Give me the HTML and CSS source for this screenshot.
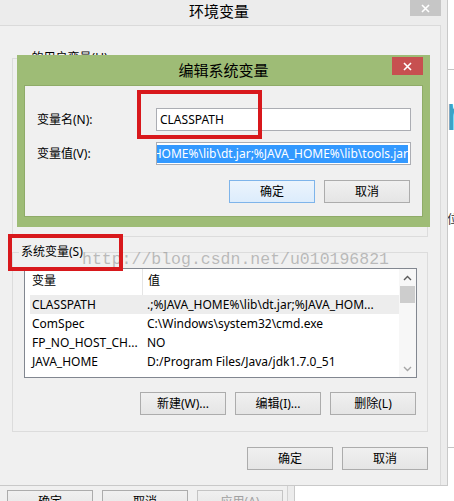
FILE: index.html
```html
<!DOCTYPE html>
<html lang="zh-CN">
<head>
<meta charset="UTF-8">
<meta name="viewport" content="width=device-width, initial-scale=1.0">
<title>环境变量</title>
<link rel="stylesheet" href="styles.css">
</head>
<body>
<div class="desk">
	<!-- 环境变量 窗口 -->
	<div class="env">
		<div class="env-title">
			<span class="env-caption">环境变量</span>
			<span class="env-close">
				<svg width="9" height="9" viewBox="0 0 9 9"><path d="M1 1L8 8M8 1L1 8" stroke="#fff" stroke-width="1.6"/></svg>
			</span>
		</div>
		<div class="env-panel">
			<fieldset class="group group-user">
				<legend>u 的用户变量(U)</legend>
			</fieldset>
			<fieldset class="group group-sys">
				<legend>系统变量(S)</legend>
				<div class="group-body">
					<div class="list">
						<div class="list-main">
							<div class="list-head"><span class="c1">变量</span><span class="c2">值</span></div>
							<div class="list-row sel"><span class="c1">CLASSPATH</span><span class="c2">.;%JAVA_HOME%\lib\dt.jar;%JAVA_HOM...</span></div>
							<div class="list-row"><span class="c1">ComSpec</span><span class="c2">C:\Windows\system32\cmd.exe</span></div>
							<div class="list-row"><span class="c1">FP_NO_HOST_CH...</span><span class="c2">NO</span></div>
							<div class="list-row"><span class="c1">JAVA_HOME</span><span class="c2">D:/Program Files/Java/jdk1.7.0_51</span></div>
						</div>
						<div class="scroll">
							<span class="scroll-arrow">
								<svg width="9" height="6" viewBox="0 0 9 6"><path d="M1 5L4.5 1.5L8 5" fill="none" stroke="#5a5a5a" stroke-width="1.4"/></svg>
							</span>
							<span class="thumb"></span>
							<span class="scroll-fill"></span>
							<span class="scroll-arrow">
								<svg width="9" height="6" viewBox="0 0 9 6"><path d="M1 1L4.5 4.5L8 1" fill="none" stroke="#a6a6a6" stroke-width="1.4"/></svg>
							</span>
						</div>
					</div>
					<div class="btn-row">
						<button class="btn">新建(W)...</button>
						<button class="btn">编辑(I)...</button>
						<button class="btn">删除(L)</button>
					</div>
				</div>
			</fieldset>
			<div class="btn-row env-btns">
				<button class="btn">确定</button>
				<button class="btn">取消</button>
			</div>
		</div>
	</div>

	<!-- 右侧露出的其他窗口 -->
	<div class="side">
		<span class="side-line top"></span>
		<span class="side-r">r</span>
		<span class="side-txt">位</span>
		<span class="side-line bottom"></span>
	</div>

	<!-- 底部露出的系统属性窗口 -->
	<div class="behind">
		<div class="behind-win">
			<button class="btn">确定</button>
			<button class="btn">取消</button>
			<button class="btn btn-off">应用(A)</button>
		</div>
		<span class="behind-edge"></span>
	</div>

	<!-- 编辑系统变量 对话框 -->
	<div class="edit-dlg">
		<div class="edit-title">
			<span class="edit-caption">编辑系统变量</span>
			<span class="edit-close">
				<svg width="9" height="9" viewBox="0 0 9 9"><path d="M1 1L8 8M8 1L1 8" stroke="#fff" stroke-width="1.6"/></svg>
			</span>
		</div>
		<div class="edit-body">
			<label class="edit-label">变量名(N):</label>
			<div class="field">CLASSPATH</div>
			<label class="edit-label">变量值(V):</label>
			<div class="field field-sel"><span>.;%JAVA_HOME%\lib\dt.jar;%JAVA_HOME%\lib\tools.jar</span></div>
			<div class="edit-btns">
				<button class="btn btn-default">确定</button>
				<button class="btn">取消</button>
			</div>
		</div>
	</div>

	<div class="watermark">http://blog.csdn.net/u010196821</div>

	<!-- 红色标注 -->
	<div class="mark mark-name"></div>
	<div class="mark mark-sys"></div>
</div>
</body>
</html>
```

FILE: styles.css
```css
body {
	margin: 0;
	background: #fff;
	color: #000;
	font-family: "Noto Sans", "Noto Sans CJK SC", sans-serif;
	font-size: 12px;
}
.desk {
	position: relative;
	width: 454px;
	height: 501px;
	overflow: hidden;
	display: grid;
	grid-template-columns: 448px 6px;
	grid-template-rows: 486px 15px;
}

/* 通用按钮 (Win8 风格) */
.btn {
	width: 86px;
	height: 23px;
	padding: 0;
	border: 1px solid #acacac;
	background: linear-gradient(#f0f0f0, #e5e5e5);
	font-family: inherit;
	font-size: 12px;
	line-height: 21px;
	color: #000;
	box-sizing: border-box;
}
.btn-default {
	border-color: #7eb4ea;
	background: linear-gradient(#ecf4fc, #dcecfc);
}
.btn-off {
	color: #a0a0a0;
	border-color: #c4c4c4;
}
.btn-row {
	display: flex;
	justify-content: flex-end;
	gap: 9px;
}

/* 环境变量窗口 */
.env {
	background: #ececec;
	border-right: 1px solid #c9c9c9;
	border-bottom: 1px solid #c9c9c9;
	box-sizing: border-box;
}
.env-title {
	display: grid;
	grid-template-columns: 1fr 31px;
	height: 25px;
	padding-right: 6px;
}
.env-caption {
	padding-left: 28px;
	text-align: center;
	font-size: 15px;
	line-height: 22px;
}
.env-close {
	display: flex;
	align-items: center;
	justify-content: center;
	height: 16px;
	background: #c6c6c6;
}
.env-panel {
	width: 441px;
	height: 460px;
	padding-top: 25px;
	border-top: 1px solid #dadada;
	border-right: 1px solid #dadada;
	background: #f0f0f0;
	box-sizing: border-box;
}
.group {
	margin: 0 12px;
	padding: 0;
	min-width: 0;
	border: 1px solid #dcdcdc;
	box-sizing: border-box;
}
.group legend {
	margin-left: 6px;
	padding: 0 2px;
	line-height: 14px;
}
.group-user {
	height: 186px;
}
.group-sys {
	margin-top: 8px;
}
.group-body {
	padding: 9px 10px 16px 11px;
}
.group-body .btn-row {
	margin-top: 14px;
	margin-right: 1px;
}
.env-btns {
	margin-top: 15px;
	padding-right: 12px;
}

/* 列表 */
.list {
	display: flex;
	height: 110px;
	border: 1px solid #828790;
	background: #fff;
	box-sizing: border-box;
}
.list-main {
	flex: 1;
	overflow: hidden;
}
.list-head {
	display: flex;
	height: 26px;
	line-height: 24px;
}
.list-head .c1 {
	width: 118px;
	padding-left: 7px;
	border-right: 1px solid #e5e5e5;
	box-sizing: border-box;
}
.list-head .c2 {
	padding-left: 5px;
}
.list-row {
	display: flex;
	height: 19px;
	margin-left: 5px;
	line-height: 19px;
	white-space: nowrap;
}
.list-row.sel {
	background: #ededed;
}
.list-row .c1 {
	width: 112px;
	padding-left: 2px;
	box-sizing: border-box;
	overflow: hidden;
}
.list-row .c2 {
	flex: 1;
	padding-left: 5px;
	overflow: hidden;
}
.scroll {
	display: flex;
	flex-direction: column;
	width: 17px;
	background: #f7f7f7;
}
.scroll-arrow {
	display: flex;
	align-items: center;
	justify-content: center;
	height: 17px;
}
.thumb {
	height: 17px;
	margin: 0 1px;
	background: #cdcdcd;
}
.scroll-fill {
	flex: 1;
}

/* 右侧露出部分 */
.side {
	display: flex;
	flex-direction: column;
	overflow: hidden;
	background: #fff;
}
.side-line {
	height: 1px;
	background: #c4c4c4;
	flex-shrink: 0;
}
.side-line.top {
	margin-top: 69px;
}
.side-r {
	margin-top: 18px;
	margin-left: -3px;
	font-size: 48px;
	line-height: 48px;
	color: #3ba3c6;
}
.side-txt {
	margin-top: 77px;
	margin-left: -1px;
	line-height: 14px;
	color: #333;
}
.side-line.bottom {
	margin-top: 220px;
}

/* 底部露出的窗口 */
.behind {
	grid-column: 1 / -1;
	display: flex;
	background: #fff;
}
.behind-win {
	display: flex;
	gap: 9px;
	width: 287px;
	padding: 4px 0 0 7px;
	background: #f0f0f0;
	box-sizing: border-box;
}
.behind-edge {
	width: 8px;
	background: #ececec;
	border-left: 1px solid #d2d2d2;
	border-right: 1px solid #c9c9c9;
	box-sizing: border-box;
}

/* 编辑系统变量 */
.edit-dlg {
	position: absolute;
	left: 17px;
	top: 55px;
	width: 413px;
	padding: 0 7px 10px;
	background: #9ebc76;
	box-sizing: border-box;
}
.edit-title {
	display: grid;
	grid-template-columns: 31px 1fr 31px;
	height: 30px;
}
.edit-caption {
	grid-column: 2;
	text-align: center;
	font-size: 15px;
	line-height: 30px;
}
.edit-close {
	display: flex;
	align-items: center;
	justify-content: center;
	height: 18px;
	margin-top: 2px;
	background: #c75050;
}
.edit-body {
	display: grid;
	grid-template-columns: 119px 255px;
	row-gap: 11px;
	padding: 22px 12px 13px;
	border: 1px solid #8fab68;
	background: #f0f0f0;
}
.edit-label {
	line-height: 23px;
}
.field {
	height: 23px;
	padding: 0 3px;
	border: 1px solid #abadb3;
	background: #fff;
	line-height: 21px;
	white-space: nowrap;
	box-sizing: border-box;
}
.field-sel {
	display: flex;
	align-items: center;
	justify-content: flex-end;
	padding: 0 2px;
	overflow: hidden;
}
.field-sel span {
	flex-shrink: 0;
	background: #3399ff;
	color: #fff;
	line-height: 18px;
}
.edit-btns {
	grid-column: 1 / -1;
	display: flex;
	justify-content: flex-end;
	gap: 9px;
	margin-top: 4px;
	margin-right: 1px;
}

/* 水印 */
.watermark {
	position: absolute;
	left: 82px;
	top: 250px;
	font-family: "Liberation Mono", monospace;
	font-size: 16.5px;
	line-height: 20px;
	color: rgba(130, 130, 130, 0.5);
	white-space: nowrap;
}

/* 红色标注 */
.mark {
	position: absolute;
	border: 4px solid #d8181c;
	box-sizing: border-box;
}
.mark-name {
	left: 137px;
	top: 90px;
	width: 125px;
	height: 49px;
}
.mark-sys {
	left: 8px;
	top: 234px;
	width: 115px;
	height: 37px;
}
```
